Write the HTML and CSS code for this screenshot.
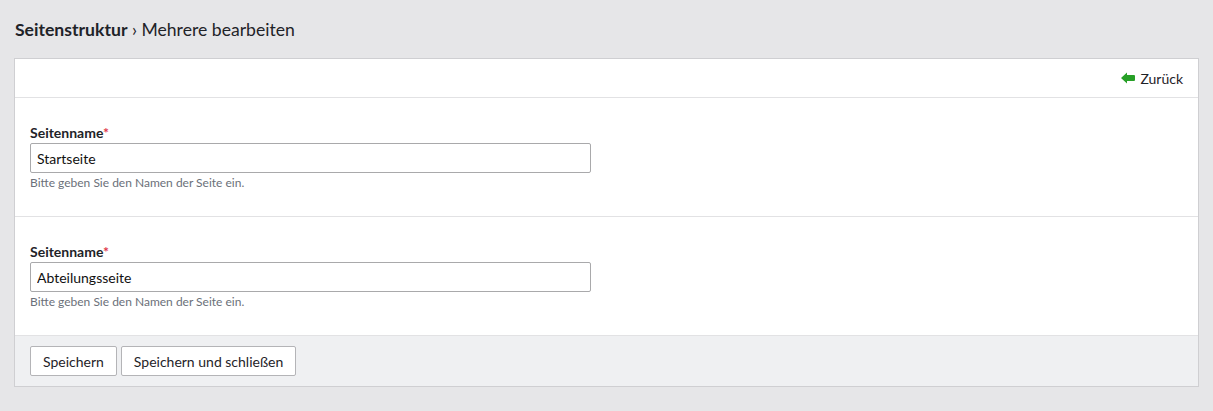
FILE: index.html
```html
<!DOCTYPE html>
<html lang="de">
<head>
<meta charset="utf-8">
<title>Mehrere bearbeiten</title>
<link rel="stylesheet" href="styles.css">
</head>
<body>
<h1 class="page-title"><strong>Seitenstruktur</strong> › Mehrere bearbeiten</h1>
<div class="panel">
  <div class="panel-head">
    <a class="back" href="#">
      <svg class="back-icon" width="14" height="12" viewBox="0 0 14 12" aria-hidden="true">
        <path d="M0 6 L6 0.5 L6 3 L13 3 Q14 3 14 4 L14 8 Q14 9 13 9 L6 9 L6 11.5 Z" fill="#27a027"/>
      </svg>
      Zurück
    </a>
  </div>
  <div class="section">
    <label class="label">Seitenname<span class="req">*</span></label>
    <input class="field" type="text" value="Startseite">
    <div class="help">Bitte geben Sie den Namen der Seite ein.</div>
  </div>
  <div class="section">
    <label class="label">Seitenname<span class="req">*</span></label>
    <input class="field" type="text" value="Abteilungsseite">
    <div class="help">Bitte geben Sie den Namen der Seite ein.</div>
  </div>
  <div class="panel-foot">
    <button class="btn" type="button">Speichern</button>
    <button class="btn" type="button">Speichern und schließen</button>
  </div>
</div>
</body>
</html>
```
FILE: styles.css
```css
html, body {
  margin: 0;
  padding: 0;
  background: #e6e6e8;
  font-family: Lato, "Open Sans", "Liberation Sans", sans-serif;
  color: #222;
}
body {
  padding: 18px 14px 0 14px;
}
.page-title {
  margin: 0 0 0 1px;
  font-size: 17.6px;
  font-weight: 400;
  line-height: 24px;
  color: #1f2328;
}
.page-title strong {
  font-weight: 700;
}
.panel {
  margin-top: 16px;
  background: #fff;
  border: 1px solid #cfcfd2;
}
.panel-head {
  height: 38px;
  display: flex;
  align-items: center;
  justify-content: flex-end;
  padding: 0 15px;
  border-bottom: 1px solid #e2e2e4;
}
.back {
  display: flex;
  align-items: center;
  gap: 5px;
  font-size: 14px;
  color: #1f2328;
  text-decoration: none;
}
.back-icon {
  display: block;
}
.section {
  padding: 24px 15px 26px 15px;
  border-bottom: 1px solid #e2e2e4;
  display: flex;
  flex-direction: column;
  align-items: flex-start;
}
.label {
  font-size: 14px;
  font-weight: 700;
  line-height: 21px;
  color: #1f2328;
}
.req {
  color: #e0374a;
}
.field {
  box-sizing: border-box;
  width: 561px;
  height: 30px;
  margin: 0;
  padding: 0 6px;
  border: 1px solid #a9a9ab;
  border-radius: 2px;
  font-family: inherit;
  font-size: 14px;
  color: #111;
  background: #fff;
  outline: none;
}
.help {
  margin-top: 3px;
  font-size: 12px;
  line-height: 14px;
  color: #6b7079;
}
.panel-foot {
  background: #eff0f2;
  padding: 10px 15px;
  display: flex;
  gap: 4px;
}
.btn {
  box-sizing: border-box;
  height: 30px;
  padding: 0 12px;
  background: #fff;
  border: 1px solid #b4b4b7;
  border-radius: 2px;
  font-family: inherit;
  font-size: 14px;
  color: #1f2328;
}
```
